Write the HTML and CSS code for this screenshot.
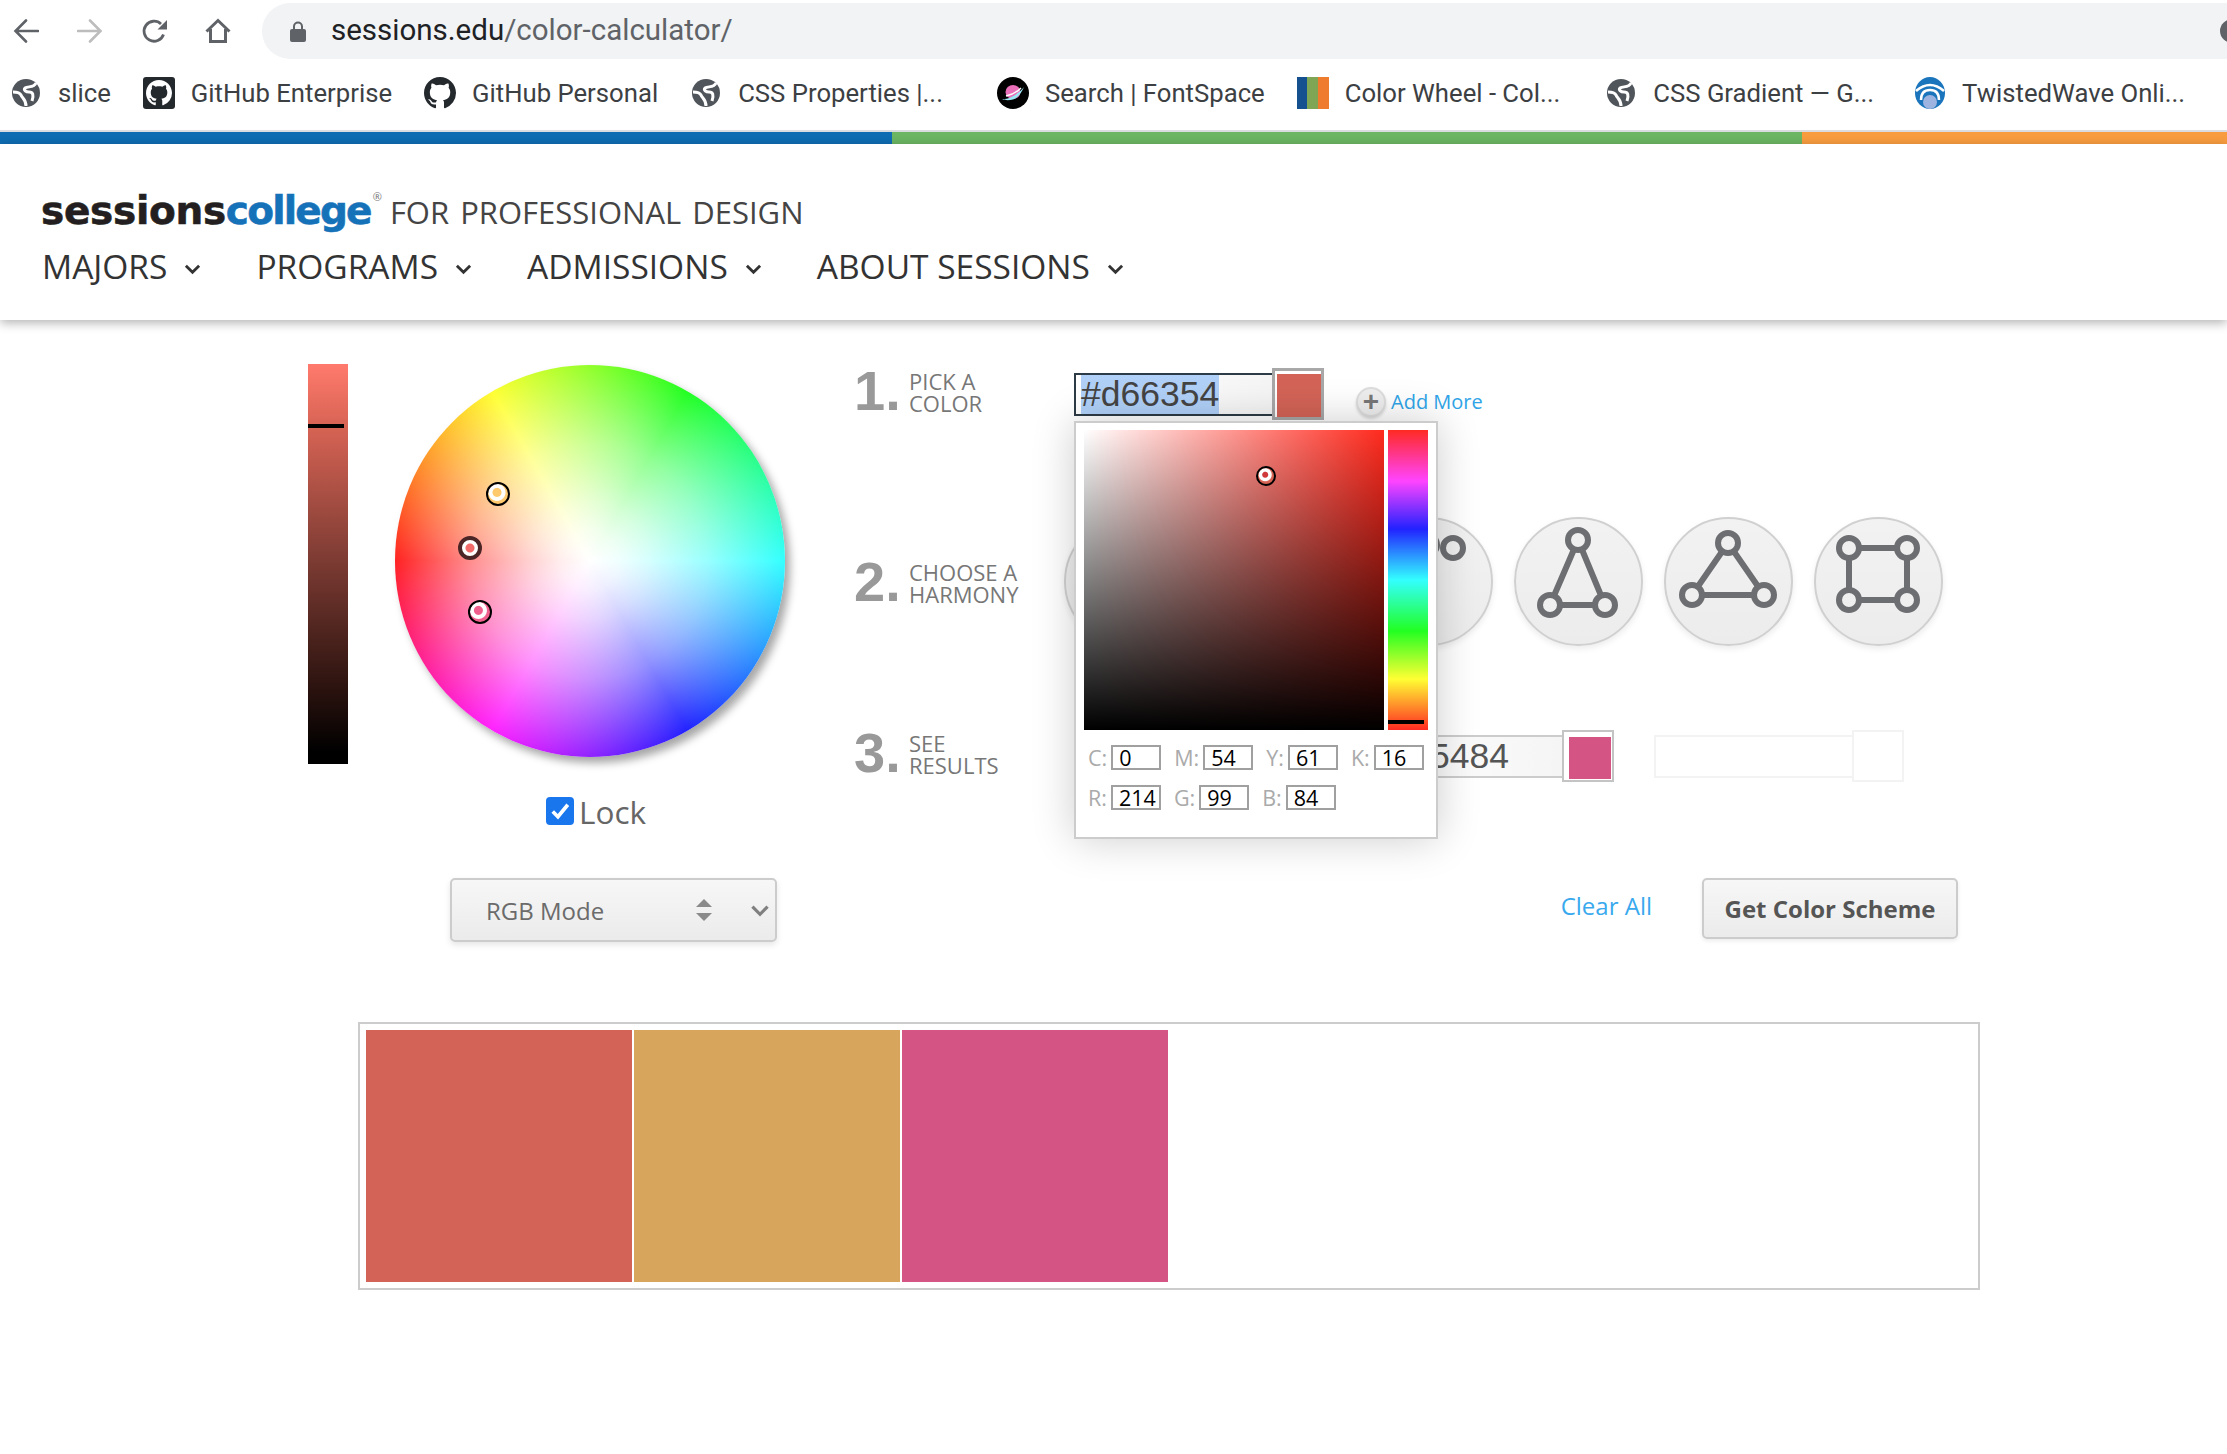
FILE: index.html
```html
<!DOCTYPE html>
<html lang="en">
<head>
    <meta charset="UTF-8">
    <title>Color Calculator</title>
    <link rel="stylesheet" href="styles.css">
</head>
<body>

<svg class="defs" width="0" height="0">
    <symbol id="globe" viewBox="-2 -2 32 32">
        <circle cx="14" cy="14" r="14" fill="#50555b"/>
        <path d="M1 13C5 13 8 14 9 16 10 19 14 20 14 27M24 4C22 9 16 7 13 9 11 11 14 13 17 13 21 13 22 16 20 22" fill="none" stroke="#fff" stroke-width="3"/>
    </symbol>
    <symbol id="octo" viewBox="0 0 16 16">
        <path d="M8 0C3.58 0 0 3.58 0 8c0 3.54 2.29 6.53 5.47 7.59.4.07.55-.17.55-.38 0-.19-.01-.82-.01-1.49-2.01.37-2.53-.49-2.69-.94-.09-.23-.48-.94-.82-1.13-.28-.15-.68-.52-.01-.53.63-.01 1.08.58 1.23.82.72 1.21 1.87.87 2.33.66.07-.52.28-.87.51-1.07-1.78-.2-3.64-.89-3.64-3.95 0-.87.31-1.59.82-2.15-.08-.2-.36-1.02.08-2.12 0 0 .67-.21 2.2.82.64-.18 1.32-.27 2-.27.68 0 1.36.09 2 .27 1.53-1.04 2.2-.82 2.2-.82.44 1.1.16 1.92.08 2.12.51.56.82 1.27.82 2.15 0 3.07-1.87 3.75-3.65 3.95.29.25.54.73.54 1.48 0 1.07-.01 1.93-.01 2.2 0 .21.15.46.55.38A8.013 8.013 0 0016 8c0-4.42-3.58-8-8-8z"/>
    </symbol>
    <symbol id="chev" viewBox="0 0 18 12">
        <path d="M2 2.500l7 7 7-7" fill="none" stroke="currentColor" stroke-width="3"/>
    </symbol>
</svg>

<!-- browser chrome -->
<div class="toolbar">
    <svg class="tool-icon" viewBox="0 0 26 26"><path d="M25 13H3M13 2.500L2.500 13 13 23.500" fill="none" stroke="#5f6368" stroke-width="2.600" stroke-linecap="round"/></svg>
    <svg class="tool-icon" viewBox="0 0 26 26"><path d="M1 13h22M13 2.500L23.500 13 13 23.500" fill="none" stroke="#bdbdbd" stroke-width="2.600" stroke-linecap="round"/></svg>
    <svg class="tool-icon" viewBox="0 0 26 26"><path d="M22.500 16.500A10 10 0 1 1 20 6" fill="none" stroke="#5f6368" stroke-width="2.800"/><path d="M27 1v10.500H16.500z" fill="#5f6368"/></svg>
    <svg class="tool-icon" viewBox="0 0 26 26"><path d="M1.500 13.500L13 2.500l11.500 11M5.500 11v12.500h15V11" fill="none" stroke="#5f6368" stroke-width="3"/></svg>
    <div class="omnibox">
        <svg class="lock" viewBox="0 0 16 21"><path d="M4 9V5.500a4 4 0 0 1 8 0V9" fill="none" stroke="#5f6368" stroke-width="2"/><rect y="8" width="16" height="13" rx="2" fill="#5f6368"/></svg>
        <span class="url"><b>sessions.edu</b>/color-calculator/</span>
        <span class="profile"></span>
    </div>
</div>

<div class="bookmarks">
    <a class="bm"><svg class="bm-icon"><use href="#globe"/></svg>slice</a>
    <a class="bm"><svg class="bm-icon" viewBox="0 0 32 32"><rect width="32" height="32" rx="3" fill="#24292e"/><use href="#octo" x="3" y="3" width="26" height="26" fill="#fff"/></svg>GitHub Enterprise</a>
    <a class="bm"><svg class="bm-icon"><use href="#octo" fill="#24292e"/></svg>GitHub Personal</a>
    <a class="bm bm-wide"><svg class="bm-icon"><use href="#globe"/></svg>CSS Properties |...</a>
    <a class="bm"><svg class="bm-icon" viewBox="0 0 32 32"><circle cx="16" cy="16" r="16" fill="#000"/><ellipse cx="16" cy="15" rx="7.500" ry="7" fill="#e86fb8"/><path d="M5 22c6 1 18-6 22-12-2 5-6 11-11 12.500-4 1-8 1-11-.5z" fill="#9be8f5"/><path d="M9 19c5-1 11-4 15-8" stroke="#fff" stroke-width="1.500" fill="none"/></svg>Search | FontSpace</a>
    <a class="bm bm-mid"><span class="bm-icon wheel-fav"><i></i><i></i><i></i></span>Color Wheel - Col...</a>
    <a class="bm bm-grad"><svg class="bm-icon"><use href="#globe"/></svg>CSS Gradient — G...</a>
    <a class="bm"><svg class="bm-icon" viewBox="0 0 32 32"><ellipse cx="16" cy="16" rx="15" ry="16" fill="#1b75bc"/><path d="M2 14Q16 2 30 14M7 23Q7 13 16 13 25 13 25 23" fill="none" stroke="#fff" stroke-width="2.500"/><circle cx="16" cy="25" r="7" fill="#9db4e0"/></svg>TwistedWave Onli...</a>
</div>

<div class="stripe"><i class="s-blue"></i><i class="s-green"></i><i class="s-orange"></i></div>

<!-- site header -->
<header class="site-head">
    <div class="logo">
        <span class="logo-a">sessions</span><span class="logo-b">college</span><sup class="logo-r">®</sup>
        <span class="logo-tag">FOR PROFESSIONAL DESIGN</span>
    </div>
    <nav class="menu">
        <a>MAJORS <svg class="caret"><use href="#chev"/></svg></a>
        <a>PROGRAMS <svg class="caret"><use href="#chev"/></svg></a>
        <a>ADMISSIONS <svg class="caret"><use href="#chev"/></svg></a>
        <a>ABOUT SESSIONS <svg class="caret"><use href="#chev"/></svg></a>
    </nav>
</header>

<main class="calc">
    <section class="left">
        <div class="picker">
            <div class="value-bar"><span class="value-mark"></span></div>
            <div class="wheel">
                <span class="marker m-yellow"></span>
                <span class="marker m-red"></span>
                <span class="marker m-pink"></span>
            </div>
        </div>
        <div class="lock-row">
            <span class="check"><svg viewBox="0 0 27 27"><path d="M6.500 14l5 5L21 7.500" fill="none" stroke="#fff" stroke-width="3.500"/></svg></span>
            Lock
        </div>
        <div class="mode-select">
            RGB Mode
            <svg class="spin" viewBox="0 0 16 22"><path d="M8 0l8 8H0zM8 22l8-8H0z" fill="#8a8a8a"/></svg>
            <svg class="mode-chev"><use href="#chev"/></svg>
        </div>
    </section>

    <section class="right">
        <div class="step step-one">
            <div class="step-title"><span class="num">1.</span><span class="lbl">PICK A<br>COLOR</span></div>
            <div class="field field-active">
                <div class="hex"><span class="sel">#d66354</span></div>
                <div class="swatch"><i class="c-red"></i></div>
                <div class="popup">
                    <div class="pop-top">
                        <div class="sv"><span class="sv-mark"></span></div>
                        <div class="hue"><span class="hue-mark"></span></div>
                    </div>
                    <div class="vals">
                        <label>C:<span class="val">0</span></label>
                        <label>M:<span class="val">54</span></label>
                        <label>Y:<span class="val">61</span></label>
                        <label>K:<span class="val">16</span></label>
                    </div>
                    <div class="vals">
                        <label>R:<span class="val">214</span></label>
                        <label>G:<span class="val">99</span></label>
                        <label>B:<span class="val">84</span></label>
                    </div>
                </div>
            </div>
            <a class="add-more"><span class="plus">+</span>Add More</a>
        </div>

        <div class="step step-two">
            <div class="step-title"><span class="num">2.</span><span class="lbl">CHOOSE A<br>HARMONY</span></div>
            <div class="harmonies">
                <div class="circle"></div>
                <div class="circle"></div>
                <div class="circle">
                    <svg class="h-icon" viewBox="0 0 129 129"><circle cx="62" cy="28" r="10"/><circle cx="88" cy="31" r="10"/></svg>
                </div>
                <div class="circle">
                    <svg class="h-icon" viewBox="0 0 129 129"><path d="M63 23L35 88H90z"/><circle cx="63" cy="23" r="10"/><circle cx="35" cy="88" r="10"/><circle cx="90" cy="88" r="10"/></svg>
                </div>
                <div class="circle">
                    <svg class="h-icon" viewBox="0 0 129 129"><path d="M63 26L27 78H99z"/><circle cx="63" cy="26" r="10"/><circle cx="27" cy="78" r="10"/><circle cx="99" cy="78" r="10"/></svg>
                </div>
                <div class="circle">
                    <svg class="h-icon" viewBox="0 0 129 129"><path d="M34 31H92V83H34z"/><circle cx="34" cy="31" r="10"/><circle cx="92" cy="31" r="10"/><circle cx="34" cy="83" r="10"/><circle cx="92" cy="83" r="10"/></svg>
                </div>
            </div>
        </div>

        <div class="step step-three">
            <div class="step-title"><span class="num">3.</span><span class="lbl">SEE<br>RESULTS</span></div>
            <div class="results">
                <div class="field"><div class="hex"></div><div class="swatch"><i class="c-gold"></i></div></div>
                <div class="field"><div class="hex hex-cut">5484</div><div class="swatch"><i class="c-pink"></i></div></div>
                <div class="field field-empty"><div class="hex"></div><div class="swatch"></div></div>
            </div>
        </div>

        <div class="actions">
            <a class="clear">Clear All</a>
            <button class="scheme">Get Color Scheme</button>
        </div>
    </section>
</main>

<div class="palette">
    <div class="chip c-red"></div>
    <div class="chip c-gold"></div>
    <div class="chip c-pink"></div>
</div>

</body>
</html>
```
FILE: styles.css
```css
* {
    box-sizing: border-box;
}
body {
    margin: 0;
    width: 2227px;
    height: 1454px;
    overflow: hidden;
    background: white;
    font-family: "Open Sans", sans-serif;
    color: #555;
}
.defs {
    position: absolute;
}

/* browser chrome */
.toolbar {
    display: flex;
    align-items: center;
    height: 60px;
    padding: 2px 0 0 13px;
    gap: 38px;
}
.tool-icon {
    width: 26px;
    height: 26px;
    flex: none;
}
.omnibox {
    flex: 1;
    display: flex;
    align-items: center;
    height: 56px;
    margin-left: -7px;
    padding-left: 28px;
    background: #f1f3f4;
    border-radius: 28px 0 0 28px;
    overflow: hidden;
}
.lock {
    width: 16px;
    height: 21px;
}
.url {
    margin: -2px 0 0 25px;
    font: 29.5px Roboto, sans-serif;
    color: #5f6368;
}
.url b {
    font-weight: normal;
    color: #202124;
}
.profile {
    width: 26px;
    height: 24px;
    margin: 0 -19px 0 auto;
    background: #5f6368;
    border-radius: 50%;
}
.bookmarks {
    display: flex;
    align-items: center;
    height: 72px;
    padding: 0 0 4px 10px;
    gap: 32px;
    border-bottom: 2px solid #dadce0;
    font: 25.7px Roboto, sans-serif;
    color: #3c4043;
}
.bm {
    display: flex;
    align-items: center;
    gap: 16px;
    white-space: nowrap;
}
.bm-wide {
    margin-right: 22px;
}
.bm-mid {
    margin-right: 13px;
}
.bm-grad {
    margin-right: 8px;
}
.bm-icon {
    width: 32px;
    height: 32px;
    flex: none;
}
.wheel-fav {
    display: flex;
}
.wheel-fav i {
    flex: 1;
}
.wheel-fav i:nth-child(1) { background: #15508f; }
.wheel-fav i:nth-child(2) { background: #7ea654; }
.wheel-fav i:nth-child(3) { background: #ee7b2e; }
.stripe {
    display: flex;
    height: 12px;
}
.s-blue { width: 892px; background: #0f6cb2; }
.s-green { width: 910px; background: #6bb563; }
.s-orange { flex: 1; background: #f89c3f; }

/* site header */
.site-head {
    position: relative;
    height: 176px;
    padding: 44px 0 0 41px;
    background: white;
    box-shadow: 0 3px 10px rgba(0, 0, 0, 0.3);
}
.logo {
    display: flex;
    align-items: baseline;
    height: 54px;
}
.logo-a, .logo-b {
    font: bold 39px "DejaVu Sans", sans-serif;
    -webkit-text-stroke: 0.6px;
}
.logo-a {
    color: #231f20;
    letter-spacing: -0.3px;
}
.logo-b {
    color: #1672b8;
    letter-spacing: -1.8px;
}
.logo-r {
    font-size: 11px;
    align-self: flex-start;
    margin: 3px 0 0 2px;
    line-height: 1;
    color: #777;
}
.logo-tag {
    margin-left: 8px;
    font-size: 31px;
    color: #444;
    word-spacing: 3px;
}
.menu {
    display: flex;
    gap: 55px;
    margin: 2px 0 0 1px;
    font-size: 33.5px;
    line-height: 45px;
    color: #333;
}
.menu a {
    display: flex;
    align-items: center;
    gap: 17px;
}
.caret {
    width: 17px;
    height: 12px;
    margin-top: 4px;
}

/* calculator */
.calc {
    display: grid;
    grid-template-columns: 546px 1104px;
    padding: 44px 0 0 308px;
}
.picker {
    display: flex;
    gap: 47px;
}
.value-bar {
    position: relative;
    width: 40px;
    height: 400px;
    background: linear-gradient(#ff7a6c, #d66354 16%, #7a3a32 50%, #2e1410 80%, #000 97%);
}
.value-mark {
    position: absolute;
    left: 0;
    top: 60px;
    width: 36px;
    height: 4px;
    background: #000;
}
.wheel {
    position: relative;
    width: 390px;
    height: 392px;
    margin-top: 1px;
    border-radius: 50%;
    background:
        radial-gradient(closest-side, #fff 0, rgba(255, 255, 255, 0.92) 15%, rgba(255, 255, 255, 0.8) 30%, rgba(255, 255, 255, 0.5) 60%, rgba(255, 255, 255, 0) 100%),
        conic-gradient(from 30deg, #2f2, #3ff 60deg, #22f 120deg, #f2f 180deg, #f22 240deg, #ff3 300deg, #2f2);
    box-shadow: 5px 6px 9px rgba(0, 0, 0, 0.35);
}
.marker {
    position: absolute;
    width: 24px;
    height: 24px;
    border: 2px solid #000;
    border-radius: 50%;
}
.m-yellow {
    left: 91px;
    top: 117px;
    background: radial-gradient(circle at 45% 42%, #ffc96e 4px, #fff 5px, #fff 8px, #ffc96e 9px);
}
.m-red {
    left: 63px;
    top: 171px;
    border: 4px solid #4c2626;
    background: radial-gradient(circle, #f26a6a 4px, #fff 5px);
}
.m-pink {
    left: 73px;
    top: 235px;
    background: radial-gradient(circle at 42% 42%, #f0608e 4px, #fff 5px, #fff 8px, #f0608e 9px);
}
.lock-row {
    display: flex;
    align-items: center;
    gap: 5px;
    height: 28px;
    margin: 33px 0 0 238px;
    font-size: 31.5px;
    color: #666;
}
.check {
    width: 28px;
    height: 28px;
    background: #1a76ed;
    border-radius: 4px;
}
.check svg {
    display: block;
}
.mode-select {
    display: flex;
    align-items: center;
    width: 327px;
    height: 64px;
    margin: 53px 0 0 142px;
    padding-left: 34px;
    border: 2px solid #ccc;
    border-radius: 5px;
    background: linear-gradient(#f7f7f7, #ebebeb);
    box-shadow: 0 3px 6px rgba(0, 0, 0, 0.1);
    font-size: 24px;
    color: #6b6b6b;
}
.spin {
    width: 16px;
    height: 22px;
    margin-left: auto;
}
.mode-chev {
    width: 20px;
    height: 13px;
    margin: 0 5px 0 38px;
    color: #808080;
}
.step {
    display: flex;
}
.step-title {
    display: flex;
    align-items: center;
    flex: none;
    width: 220px;
    height: 52px;
}
.num {
    width: 55px;
    flex: none;
    font: bold 56px "Liberation Sans", sans-serif;
    color: #999;
}
.lbl {
    margin-top: 3px;
    font-size: 22px;
    line-height: 22px;
    color: #777;
}
.step-one {
    height: 153px;
}
.step-two {
    height: 129px;
    align-items: center;
}
.step-three {
    height: 52px;
    margin-top: 84px;
}
.step-three .step-title {
    margin-top: -4px;
}
.field {
    position: relative;
    display: flex;
    align-items: center;
    width: 250px;
    height: 52px;
    flex: none;
}
.field-active {
    margin-top: 4px;
}
.hex {
    width: 198px;
    height: 43px;
    padding-left: 5px;
    border: 2px solid #ccc;
    border-right: 0;
    background: linear-gradient(to right, #fff, #f5f5f5);
    font: 35.5px/39px "Liberation Sans", sans-serif;
    color: #555;
    white-space: nowrap;
}
.hex-cut {
    padding-left: 64px;
}
.field-active .hex {
    border: 2px solid #2d3b46;
    border-right: 0;
    color: #444;
}
.sel {
    display: inline-block;
    height: 39px;
    background: #b0d0f8;
}
.swatch {
    width: 52px;
    height: 52px;
    padding: 5px 1px 1px 5px;
    border: 2px solid #c4c4c4;
    background: #fff;
}
.field-active .swatch {
    border-color: #a8a8a8;
    border-width: 3px;
    padding: 3px 0 0 2px;
}
.swatch i {
    display: block;
    height: 100%;
}
.c-red { background: #d36357; }
.c-gold { background: #d8a55d; }
.c-pink { background: #d45484; }
.field-empty .hex, .field-empty .swatch {
    border-color: #f3f3f3;
    background: white;
}
.add-more {
    display: flex;
    align-items: center;
    gap: 5px;
    height: 30px;
    margin: 22px 0 0 32px;
    font-size: 20px;
    color: #2fa4e7;
}
.plus {
    width: 30px;
    height: 30px;
    margin-top: 2px;
    border: 2px solid #ddd;
    border-radius: 50%;
    background: #eee;
    box-shadow: 0 2px 3px rgba(0, 0, 0, 0.15);
    font: bold 28px/25px "Liberation Sans", sans-serif;
    text-align: center;
    color: #777;
}

/* color popup */
.popup {
    position: absolute;
    z-index: 5;
    left: 0;
    top: 53px;
    width: 364px;
    height: 418px;
    padding: 7px 8px;
    border: 2px solid #ccc;
    background: white;
    box-shadow: 0 0 40px rgba(0, 0, 0, 0.2);
}
.pop-top {
    display: flex;
    gap: 4px;
    margin-bottom: 14px;
}
.sv {
    position: relative;
    width: 300px;
    height: 300px;
    background:
        linear-gradient(to top, #000, rgba(0, 0, 0, 0)),
        linear-gradient(to right, #fff, #ff2a1e);
}
.sv-mark {
    position: absolute;
    left: 172px;
    top: 36px;
    width: 20px;
    height: 20px;
    border: 2px solid #000;
    border-radius: 50%;
    background: radial-gradient(circle at 45% 42%, #d03a3a 2.500px, #fff 3.500px, #fff 6px, #d66354 7px);
}
.hue {
    position: relative;
    width: 40px;
    height: 300px;
    background: linear-gradient(#ff2a22, #f4f 17%, #22f 33%, #3ff 50%, #2f2 67%, #ff3 83%, #ff2a22);
}
.hue-mark {
    position: absolute;
    left: 0;
    top: 290px;
    width: 36px;
    height: 4px;
    background: #000;
}
.vals {
    display: flex;
    gap: 13px;
    height: 26px;
    margin: 0 0 14px 4px;
}
.vals label {
    display: flex;
    align-items: center;
    gap: 4px;
    font-size: 21.5px;
    color: #aaa;
}
.val {
    width: 50px;
    height: 25px;
    padding-left: 6px;
    border: 2px solid #a0a0a0;
    font-size: 21.5px;
    line-height: 21px;
    color: #000;
}

/* harmonies */
.harmonies {
    display: flex;
    gap: 21px;
    margin-left: -10px;
}
.circle {
    width: 129px;
    height: 129px;
    border: 2px solid #d0d0d0;
    border-radius: 50%;
    background: linear-gradient(#f2f2f2, #ececec);
    box-shadow: 0 3px 6px rgba(0, 0, 0, 0.08);
}
.h-icon {
    display: block;
    width: 129px;
    height: 129px;
    margin: -2px 0 0 -1px;
    fill: none;
    stroke: #6d6e71;
    stroke-width: 6;
}
.h-icon circle {
    fill: #efefef;
}
.results {
    display: flex;
    gap: 40px;
}

.actions {
    display: flex;
    justify-content: flex-end;
    margin-top: 96px;
}
.clear {
    margin-top: 11px;
    font-size: 24px;
    color: #39a9ee;
}
.scheme {
    width: 256px;
    height: 61px;
    margin-left: 50px;
    border: 2px solid #ccc;
    border-radius: 5px;
    background: linear-gradient(#f7f7f7, #ebebeb);
    box-shadow: 0 2px 4px rgba(0, 0, 0, 0.08);
    font: 700 24px "Open Sans", sans-serif;
    color: #555;
}

.palette {
    display: flex;
    gap: 2px;
    width: 1622px;
    height: 268px;
    margin: 80px 0 0 358px;
    padding: 6px;
    border: 2px solid #ccc;
}
.chip {
    width: 266px;
}
```
